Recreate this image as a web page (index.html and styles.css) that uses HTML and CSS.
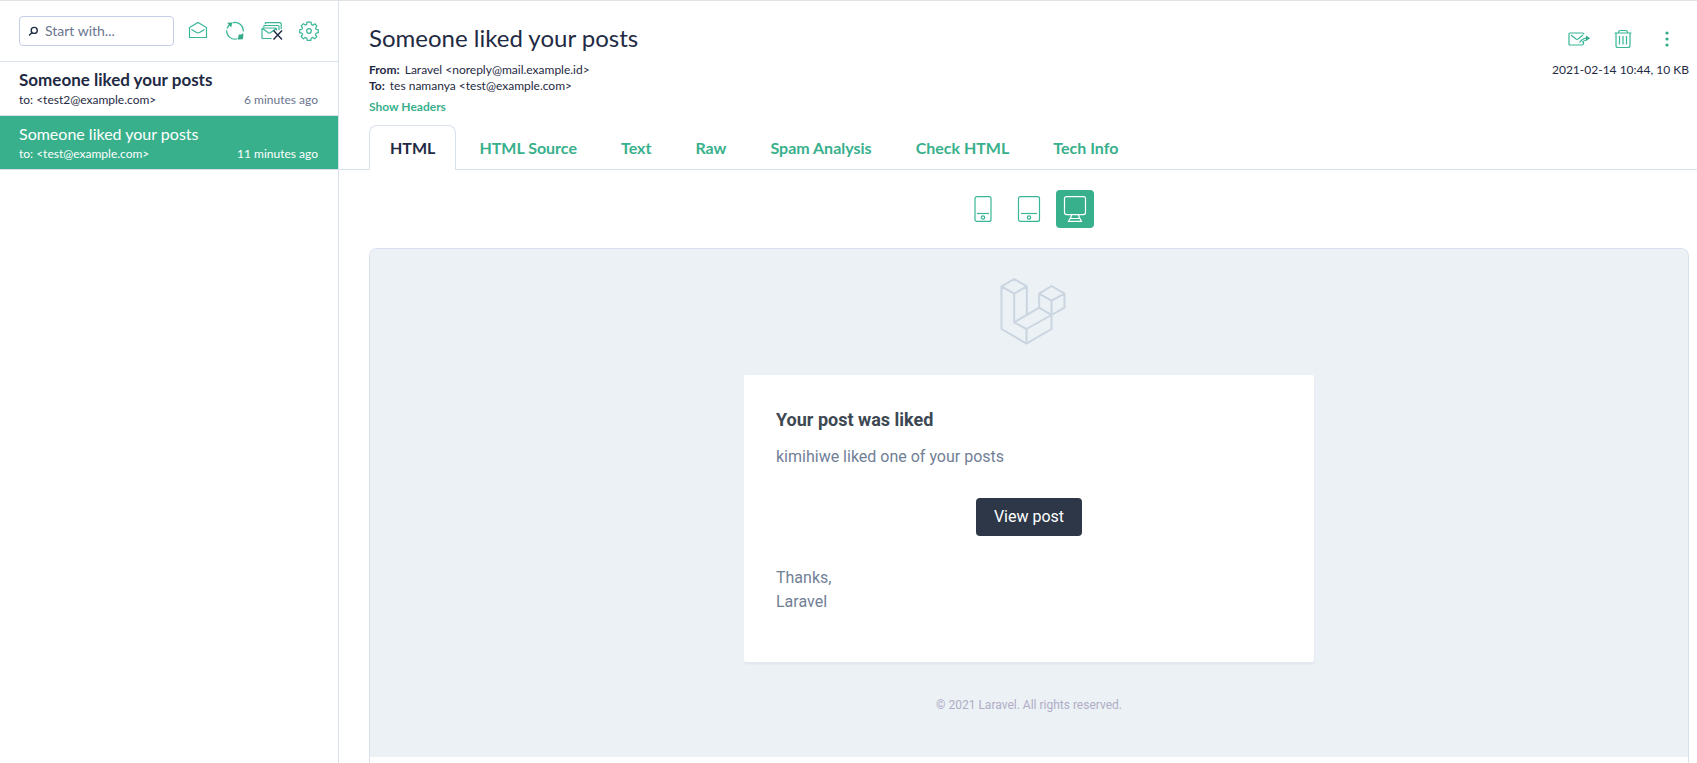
FILE: index.html
```html
<!DOCTYPE html>
<html lang="en">
<head>
<meta charset="utf-8">
<title>Someone liked your posts</title>
<link rel="stylesheet" href="styles.css">
</head>
<body>
<div class="app">
  <aside class="sidebar">
    <div class="toolbar">
      <label class="search">
        <svg class="search-icon" viewBox="0 0 12 12" aria-hidden="true"><circle cx="6.800" cy="4.800" r="3.300"/><path d="M4.400 7.200 1.200 10.400"/></svg>
        <input class="search-input" type="text" placeholder="Start with..." aria-label="Search messages">
      </label>
      <div class="tools">
        <button class="icon-button" type="button" aria-label="Mark all as read">
          <svg class="icon" viewBox="0 0 20 20"><path d="M1.500 6.500 10 1.500 18.500 6.500V16.500H1.500ZM3.500 8.500l5 3q1.500.8 3 0l5-3"/></svg>
        </button>
        <button class="icon-button" type="button" aria-label="Refresh">
          <svg class="icon" viewBox="0 0 20 20"><path d="M7.500 1.900A8.300 8.300 0 0 1 18.300 10.500M12.500 17.800A8.300 8.300 0 0 1 1.700 9.200M2 7.500q1-2.500 2.800-4M18 12.500q-1 2.500-2.800 4"/><path class="dark-fill" d="M2.200 1.800 7.200 1.600 6.200 6.600ZM17.800 18.200 12.800 18.400 13.800 13.400 18.500 13.600Z"/></svg>
        </button>
        <button class="icon-button" type="button" aria-label="Delete all messages">
          <svg class="icon icon-wide" viewBox="0 0 22 20"><path d="M10.500 17.500H2q-1 0-1-1V8q0-1 1-1h12.500q1 0 1 1v1.500M1.500 7.500l5.800 4.300q1 .6 2 0l5.500-4M2.500 6l.8-1.500H17q1 0 1 1V9M4 3.300l.8-1.600H19q1.200 0 1.200 1V8"/><path class="ink" d="m12.500 9.500 8.500 9M21 9.500l-8.500 9"/></svg>
        </button>
        <button class="icon-button" type="button" aria-label="Settings">
          <svg class="icon" viewBox="0 0 20 20"><path d="M8 1.200h4l.5 2.400 1.400.6 2-1.400 2 2.200-1.300 2 .5 1.300 2.200.4v3l-2.200.5-.6 1.400 1.300 2-2.200 2.200-2-1.300-1.400.6-.4 2.200H8.300l-.5-2.200-1.400-.6-2 1.300-2.200-2.200 1.300-2-.6-1.400-2.200-.5v-3l2.200-.4.6-1.400-1.300-2 2.200-2.200 2 1.400 1.200-.6Z"/><circle cx="10" cy="10" r="2.300"/></svg>
        </button>
      </div>
    </div>
    <ul class="messages">
      <li><a class="message message-unread" href="#first">
        <span class="message-subject">Someone liked your posts</span>
        <span class="message-meta"><span>to: &lt;test2@example.com&gt;</span><time class="message-time">6 minutes ago</time></span>
      </a></li>
      <li><a class="message message-active" href="#second">
        <span class="message-subject">Someone liked your posts</span>
        <span class="message-meta"><span>to: &lt;test@example.com&gt;</span><time class="message-time">11 minutes ago</time></span>
      </a></li>
    </ul>
  </aside>

  <main class="main">
    <header class="header">
      <div class="details">
        <h1 class="subject">Someone liked your posts</h1>
        <p class="address"><b>From:</b> Laravel &lt;noreply@mail.example.id&gt;</p>
        <p class="address"><b>To:</b> tes namanya &lt;test@example.com&gt;</p>
        <a class="headers-link" href="#headers">Show Headers</a>
      </div>
      <div class="side">
        <div class="actions">
          <button class="icon-button" type="button" aria-label="Forward">
            <svg class="icon icon-wide" viewBox="0 0 22 20"><path d="M15.500 13v1.500q0 1.500-1.500 1.500H2q-1 0-1-1V5q0-1 1-1h12.500q1.300 0 1.300 1v.5M3 6l5 4q1 .6 2 0l5-4M11.500 13.500q3-4.300 7.500-4.300M14 13.500q1.500-2 4.500-2.500"/><path class="dark-fill" d="m18 6.400 4 2.800-4 2.800Z"/></svg>
          </button>
          <button class="icon-button" type="button" aria-label="Delete">
            <svg class="icon" viewBox="0 0 20 20"><path d="M1.500 4h17M5.300 4q.2-2.500 2-2.500h5.400q1.800 0 2 2.500M3 4v12.500q0 2 2 2h10q2 0 2-2V4M6.500 7v8.500M10 7v8.500M13.500 7v8.500"/></svg>
          </button>
          <button class="icon-button" type="button" aria-label="More actions">
            <svg class="icon" viewBox="0 0 20 20"><g class="dark-fill"><circle cx="10" cy="4" r="1.600"/><circle cx="10" cy="10" r="1.600"/><circle cx="10" cy="16" r="1.600"/></g></svg>
          </button>
        </div>
        <p class="address">2021-02-14 10:44, 10 KB</p>
      </div>
    </header>

    <nav class="tabs">
      <a class="tab tab-active" href="#html">HTML</a>
      <a class="tab" href="#source">HTML Source</a>
      <a class="tab" href="#text">Text</a>
      <a class="tab" href="#raw">Raw</a>
      <a class="tab" href="#spam">Spam Analysis</a>
      <a class="tab" href="#check">Check HTML</a>
      <a class="tab" href="#tech">Tech Info</a>
    </nav>

    <div class="devices">
      <button class="device" type="button" aria-label="Phone view">
        <svg class="device-icon" viewBox="0 0 26 26"><rect x="5" y=".6" width="16" height="24.800" rx="2"/><path d="M7 17.500h12"/><circle cx="13" cy="21.500" r="1.700"/></svg>
      </button>
      <button class="device" type="button" aria-label="Tablet view">
        <svg class="device-icon" viewBox="0 0 26 26"><rect x="2.500" y=".6" width="21" height="24.800" rx="2"/><path d="M5 17.500h16"/><circle cx="13" cy="21.500" r="1.700"/></svg>
      </button>
      <button class="device device-active" type="button" aria-label="Desktop view" aria-pressed="true">
        <svg class="device-icon" viewBox="0 0 26 26"><rect x="2.500" y=".6" width="21" height="18" rx="2"/><path d="M9.500 18.500 8.500 22.500M16.500 18.500l1 4M8 22.500h10l1.500 2.800h-13Z"/></svg>
      </button>
    </div>

    <section class="preview">
      <div class="email">
        <svg class="laravel" viewBox="94.500 282 225 225" role="img" aria-label="Laravel logo"><path d="M161 297 123 319 161 341 199 319ZM123 319V447L198 491 273 447V362M161 341V427L198 447V491M199 319V405M198 447 273 405M161 427 236 383M273 318 236 341 273 362 312 341ZM236 341V383L273 405 312 383V341"/></svg>
        <article class="card">
          <h2 class="card-title">Your post was liked</h2>
          <p class="card-text">kimihiwe liked one of your posts</p>
          <a class="card-button" href="#post">View post</a>
          <p class="card-text">Thanks,<br>Laravel</p>
        </article>
        <footer class="email-footer">© 2021 Laravel. All rights reserved.</footer>
      </div>
    </section>
  </main>
</div>
</body>
</html>
```
FILE: styles.css
```css
*, *::before, *::after { box-sizing: border-box; }
body {
  margin: 0;
  background: #fff;
  color: #1f2a44;
  font-family: Lato, "Noto Sans", sans-serif;
}
h1, h2, p, ul { margin: 0; padding: 0; }
ul { list-style: none; }
a { color: inherit; text-decoration: none; }
button { padding: 0; border: 0; background: none; cursor: pointer; }

.app { display: flex; height: 100vh; border-top: 1px solid #e2e2e2; }

.sidebar { flex: 0 0 339px; border-right: 1px solid #dae1ee; }
.toolbar {
  display: flex;
  align-items: flex-start;
  gap: 14px;
  height: 61px;
  padding: 15px 19px;
  border-bottom: 1px solid #dae1ee;
}
.search {
  display: flex;
  align-items: center;
  gap: 6px;
  width: 155px;
  height: 30px;
  padding: 0 8px;
  border: 1px solid #c3cfe6;
  border-radius: 4px;
}
.search-icon { flex: none; width: 11px; height: 11px; fill: none; stroke: #1f2a44; stroke-width: 1.5; }
.search-input {
  width: 100%;
  min-width: 0;
  padding: 0;
  border: 0;
  outline: 0;
  background: none;
  color: #1f2a44;
  font: 14px/20px Lato, sans-serif;
}
.search-input::placeholder { color: #6b7590; opacity: 1; }
.tools { display: flex; flex: 1; justify-content: space-between; padding-top: 5px; }
.icon-button { display: flex; align-items: center; justify-content: center; width: 20px; height: 20px; }
.icon { flex: none; width: 20px; height: 20px; fill: none; stroke: #38b697; stroke-width: 1.2; }
.icon-wide { width: 22px; }
.icon .ink { stroke: #1f2a44; stroke-width: 1.4; }
.icon .dark-fill { fill: #2fab87; stroke: none; }

.message { display: block; height: 54px; padding: 7px 20px 0 19px; border-bottom: 1px solid #dae1ee; color: #1f2a44; }
.message-subject { display: block; font-size: 16px; line-height: 22px; }
.message-unread .message-subject { font-size: 17px; font-weight: 700; }
.message-meta { display: flex; justify-content: space-between; padding-top: 1px; font-size: 12px; line-height: 16px; }
.message-time { color: #6b7590; }
.message-active, .message-active .message-time { color: #fff; }
.message-active { background: #38b08c; }

.main { display: flex; flex: 1; flex-direction: column; min-width: 0; }
.header { display: flex; justify-content: space-between; padding: 21px 8px 10px 30px; }
.subject { font-size: 24px; font-weight: 400; line-height: 32px; margin-bottom: 8px; }
.address { font-size: 12px; line-height: 16px; }
.address b { margin-right: 2px; }
.headers-link { display: block; margin-top: 5px; color: #38b08c; font-size: 12px; font-weight: 700; line-height: 16px; }
.side { display: flex; flex-direction: column; align-items: flex-end; }
.actions { display: flex; gap: 24px; padding: 7px 12px 0 0; margin-bottom: 13px; }

.tabs { display: flex; gap: 2px; padding-left: 30px; border-bottom: 1px solid #dae1ee; }
.tab {
  height: 44px;
  padding: 0 20px;
  border: 1px solid transparent;
  border-bottom: 0;
  color: #38b08c;
  font-size: 16px;
  font-weight: 700;
  line-height: 44px;
}
.tab-active {
  height: 45px;
  margin-bottom: -1px;
  border-color: #dae1ee;
  border-radius: 8px 8px 0 0;
  background: #fff;
  color: #1f2a44;
}

.devices { display: flex; justify-content: center; gap: 8px; padding: 20px 8px 20px 30px; }
.device { display: flex; align-items: center; justify-content: center; width: 38px; height: 38px; border-radius: 4px; color: #38b697; }
.device-active { background: #38b08c; color: #fff; }
.device-icon { width: 26px; height: 26px; fill: none; stroke: currentColor; stroke-width: 1.2; }

.preview {
  flex: 1;
  margin: 0 8px 0 30px;
  border: 1px solid #dae1ee;
  border-bottom: 0;
  border-radius: 8px 8px 0 0;
  overflow: hidden;
}
.email {
  display: flex;
  flex-direction: column;
  align-items: center;
  padding: 25px 0 42px;
  background: #ebf1f5;
  font-family: Roboto, sans-serif;
}
.laravel { width: 75px; height: 75px; fill: none; stroke: #cbd5e0; stroke-width: 6; stroke-linejoin: round; }
.card {
  display: flex;
  flex-direction: column;
  align-items: flex-start;
  width: 570px;
  max-width: 100%;
  margin-top: 26px;
  padding: 33px 32px 48px;
  border-radius: 2px;
  background: #fff;
  box-shadow: 0 2px 0 #e3e8f1, 1px 3px 0 #e7ebf4;
  color: #718096;
}
.card-title { margin-bottom: 13px; color: #3d4852; font-size: 18px; font-weight: 700; line-height: 24px; }
.card-text { font-size: 16px; line-height: 24px; }
.card-button {
  align-self: center;
  margin: 29px 0 30px;
  padding: 0 18px;
  border-radius: 4px;
  background: #2d3748;
  color: #fff;
  font-size: 16px;
  line-height: 38px;
}
.email-footer { margin-top: 33px; color: #b0adc5; font-size: 12px; line-height: 20px; }
```
